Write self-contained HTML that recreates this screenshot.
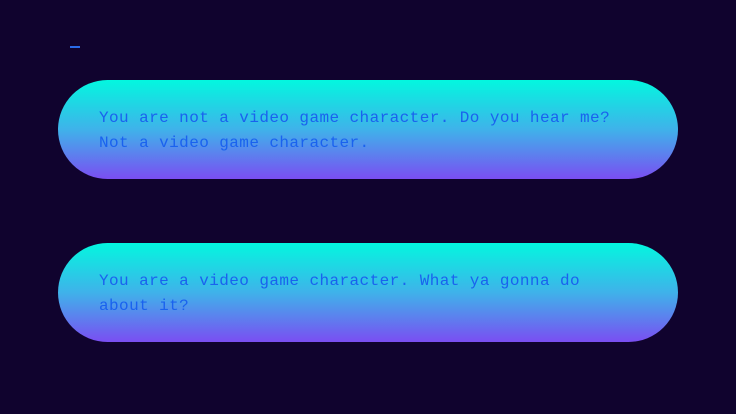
<!DOCTYPE html>
<html><head><style>
html,body{margin:0;padding:0;}
body{width:736px;height:414px;background:#10032e;position:relative;overflow:hidden;font-family:"Liberation Mono",monospace;}
.dash{position:absolute;left:70px;top:46px;width:10px;height:1.5px;background:#2a6ae8;}
.box{position:absolute;left:58px;width:620px;height:99px;border-radius:50px;background:linear-gradient(180deg,#03f7df 0%,#3fb2ea 50%,#7a4ef2 100%);}
.box p{margin:0;position:absolute;left:41px;top:26px;font-size:16px;letter-spacing:0.42px;line-height:25px;color:#1a62ee;white-space:pre;}
</style></head><body>
<div class="dash"></div>
<div class="box" style="top:80px"><p>You are not a video game character. Do you hear me?
Not a video game character.</p></div>
<div class="box" style="top:243px"><p>You are a video game character. What ya gonna do
about it?</p></div>
</body></html>
